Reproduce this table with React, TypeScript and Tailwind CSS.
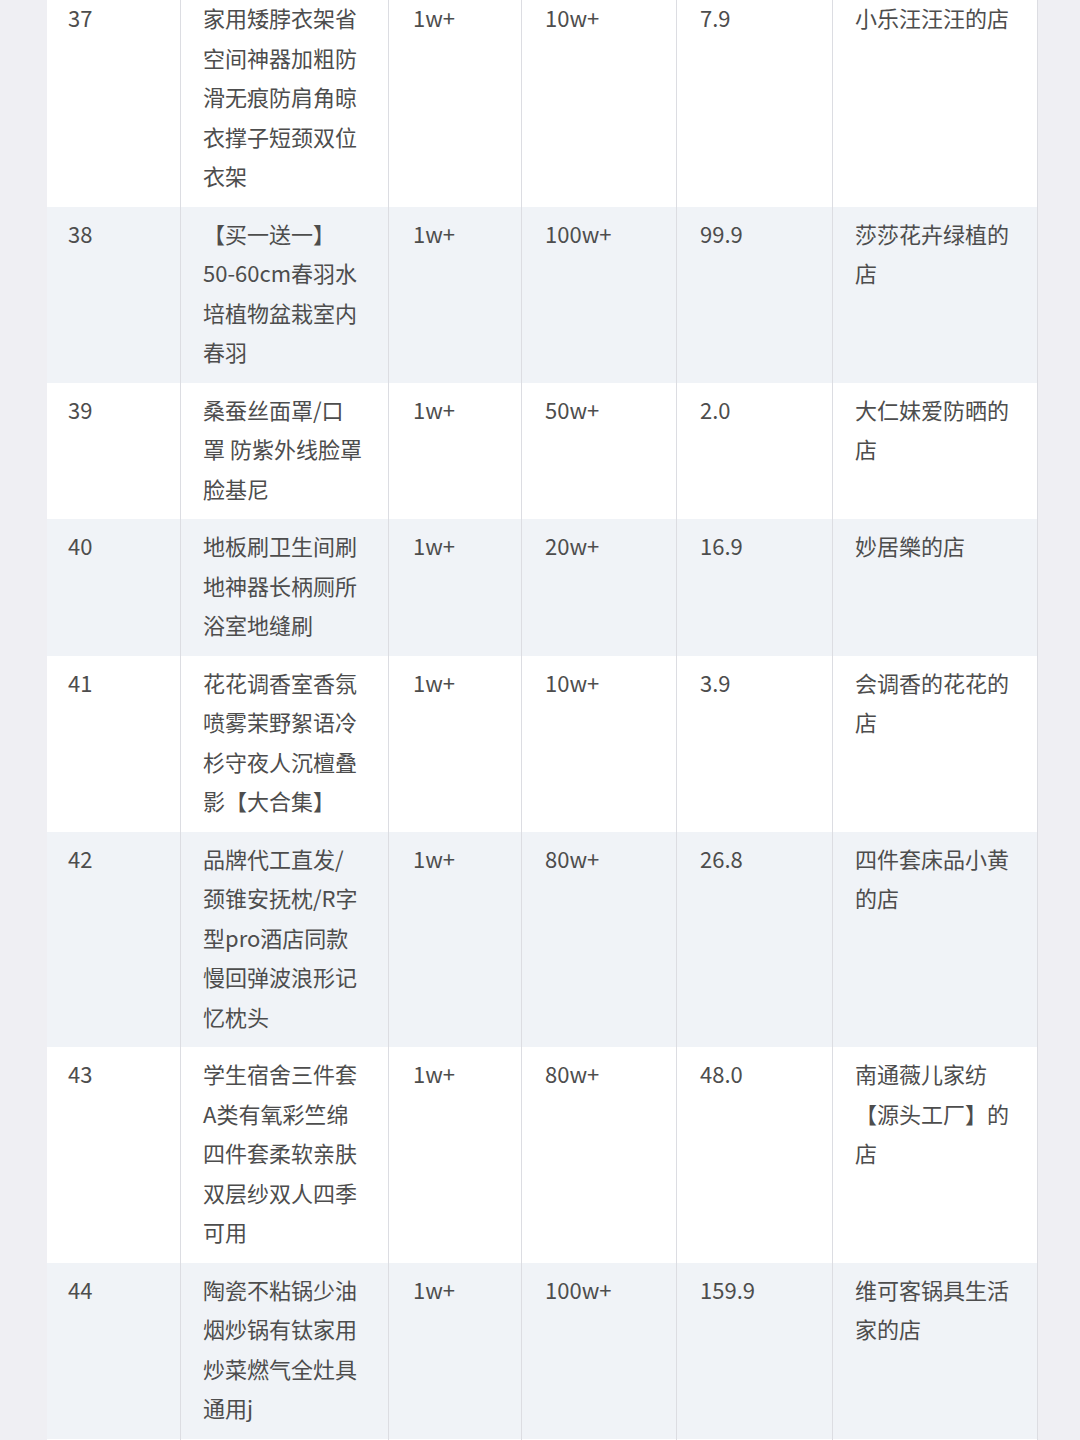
const rows = [
  {
    no: "37",
    name: ["家用矮脖衣架省", "空间神器加粗防", "滑无痕防肩角晾", "衣撑子短颈双位", "衣架"],
    sales: "1w+",
    total: "10w+",
    price: "7.9",
    shop: ["小乐汪汪汪的店"],
  },
  {
    no: "38",
    name: ["【买一送一】", "50-60cm春羽水", "培植物盆栽室内", "春羽"],
    sales: "1w+",
    total: "100w+",
    price: "99.9",
    shop: ["莎莎花卉绿植的", "店"],
  },
  {
    no: "39",
    name: ["桑蚕丝面罩/口", "罩 防紫外线脸罩", "脸基尼"],
    sales: "1w+",
    total: "50w+",
    price: "2.0",
    shop: ["大仁妹爱防晒的", "店"],
  },
  {
    no: "40",
    name: ["地板刷卫生间刷", "地神器长柄厕所", "浴室地缝刷"],
    sales: "1w+",
    total: "20w+",
    price: "16.9",
    shop: ["妙居樂的店"],
  },
  {
    no: "41",
    name: ["花花调香室香氛", "喷雾茉野絮语冷", "杉守夜人沉檀叠", "影【大合集】"],
    sales: "1w+",
    total: "10w+",
    price: "3.9",
    shop: ["会调香的花花的", "店"],
  },
  {
    no: "42",
    name: ["品牌代工直发/", "颈锥安抚枕/R字", "型pro酒店同款", "慢回弹波浪形记", "忆枕头"],
    sales: "1w+",
    total: "80w+",
    price: "26.8",
    shop: ["四件套床品小黄", "的店"],
  },
  {
    no: "43",
    name: ["学生宿舍三件套", "A类有氧彩竺绵", "四件套柔软亲肤", "双层纱双人四季", "可用"],
    sales: "1w+",
    total: "80w+",
    price: "48.0",
    shop: ["南通薇儿家纺", "【源头工厂】的", "店"],
  },
  {
    no: "44",
    name: ["陶瓷不粘锅少油", "烟炒锅有钛家用", "炒菜燃气全灶具", "通用j"],
    sales: "1w+",
    total: "100w+",
    price: "159.9",
    shop: ["维可客锅具生活", "家的店"],
  },
  { no: "", name: [""], sales: "", total: "", price: "", shop: [""] },
];

const Lines = ({ lines }: { lines: string[] }) => (
  <>
    {lines.map((l, i) => (
      <div key={i} className="whitespace-pre">
        {l || "\u00a0"}
      </div>
    ))}
  </>
);

export default function App() {
  return (
    <div
      className="min-h-[1440px] overflow-hidden bg-[#efeff3] px-[47px] text-[22px] leading-[39.5px] text-[#4d4d4d]"
      style={{ fontFamily: '"Noto Sans CJK SC", "Noto Sans", sans-serif' }}
    >
      {/* table, first row is cut off at the top */}
      <div className="mt-[-9px] flex w-[991px] flex-col border-r border-[#dcdde2]">
        {rows.map((r, i) => (
          <div
            key={i}
            className={`grid grid-cols-[133px_208px_133px_155px_156px_206px] ${
              i % 2 === 1 ? "bg-[#f0f3f7]" : "bg-white"
            }`}
          >
            <div className="pb-[11px] pl-[21px] pt-[7px]">{r.no}</div>
            <div className="border-l border-[#dcdde2] pb-[11px] pl-[22px] pt-[7px]">
              <Lines lines={r.name} />
            </div>
            <div className="border-l border-[#dcdde2] pb-[11px] pl-[24px] pt-[7px]">
              {r.sales}
            </div>
            <div className="border-l border-[#dcdde2] pb-[11px] pl-[23px] pt-[7px]">
              {r.total}
            </div>
            <div className="border-l border-[#dcdde2] pb-[11px] pl-[23px] pt-[7px]">
              {r.price}
            </div>
            <div className="border-l border-[#dcdde2] pb-[11px] pl-[22px] pt-[7px]">
              <Lines lines={r.shop} />
            </div>
          </div>
        ))}
      </div>
    </div>
  );
}
